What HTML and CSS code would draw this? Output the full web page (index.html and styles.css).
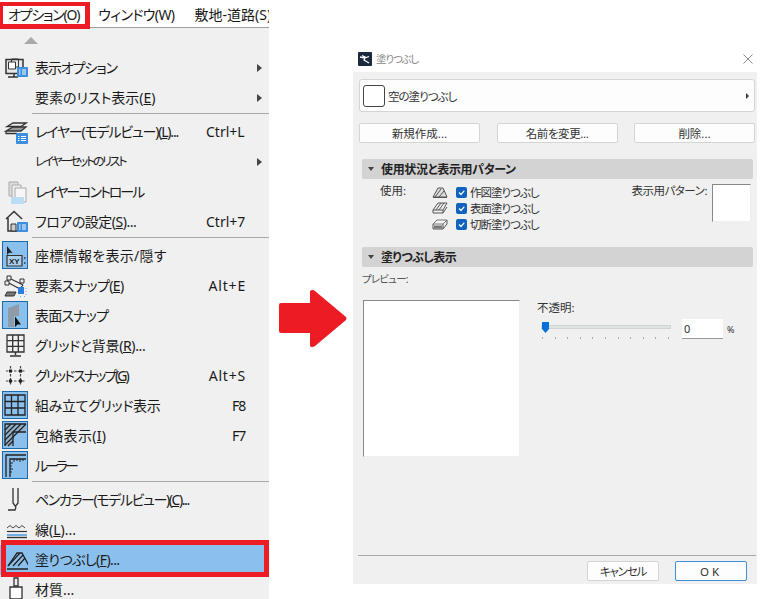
FILE: index.html
```html
<!DOCTYPE html>
<html lang="ja">
<head>
<meta charset="utf-8">
<title>塗りつぶし</title>
<link rel="stylesheet" href="styles.css">
</head>
<body>
<div class="page">
  <nav class="menu">
    <div class="menubar">
      <span class="bar-item bar-item--marked"><span class="sp-f">オプション(O)</span></span>
      <span class="bar-item sp-c">ウィンドウ(W)</span>
      <span class="bar-item">敷地-道路(S)</span>
    </div>
    <div class="scroll-up"><span class="scroll-tri"></span></div>

    <div class="item"><span class="ico"><svg viewBox="0 0 26 28"><path d="M4 6.500h17v14H4z" fill="#e8e8e8" stroke="#333" stroke-width="1.500"/><path d="M6.500 9h7v7h-7z" fill="#fff" stroke="#333"/><path d="M9.500 9V6h7v8h-3" fill="none" stroke="#333"/><path d="M12 21v2.500M6 24h10" stroke="#333" stroke-width="1.500"/><rect x="15" y="14" width="11" height="10" rx="1" fill="#3c8ee0"/><path d="M17 17h1.500M17 19h1.500M17 21h1.500M20 17h4M20 19h4M20 21h4" stroke="#fff"/></svg></span><span class="label sp-e">表示オプション</span><span class="sub"></span></div>
    <div class="item"><span class="ico"></span><span class="label">要素のリスト表示(<u>E</u>)</span><span class="sub"></span></div>
    <div class="sep"></div>
    <div class="item"><span class="ico"><svg viewBox="0 0 26 28"><path d="M5 9.500 11 6h13l-5 3.500z" fill="#eee" stroke="#333" stroke-width="1.300"/><path d="M4 14l7-4h13l-5 4z" fill="#999" stroke="#333" stroke-width="1.300"/><path d="M4 14v2.500h11" fill="none" stroke="#333" stroke-width="1.300"/><rect x="14" y="16" width="12" height="11" rx="1" fill="#3c8ee0"/><path d="M16 19.500h1.500M16 21.500h1.500M16 23.500h1.500M19 19.500h5M19 21.500h5M19 23.500h5" stroke="#fff"/></svg></span><span class="label sp-f">レイヤー(モデルビュー)(<u>L</u>)...</span><span class="key">Ctrl+L</span></div>
    <div class="item item--small"><span class="ico"></span><span class="label sp-i">レイヤーセットのリスト</span><span class="sub"></span></div>
    <div class="item"><span class="ico"><svg viewBox="0 0 26 28"><path d="M7 5h9v14H7z" fill="#ddd" stroke="#aaa"/><path d="M10 8h9v14h-9z" fill="#eee" stroke="#aaa"/><path d="M13 11h11v14H13z" fill="#f6f6f6" stroke="#aaa"/><rect x="9" y="20" width="13" height="7" fill="#bcdcf4"/></svg></span><span class="label sp-h">レイヤーコントロール</span></div>
    <div class="item"><span class="ico"><svg viewBox="0 0 26 28"><path d="M4 12 12 4.500 20 12M6 11v13h10" fill="none" stroke="#333" stroke-width="1.500"/><path d="M9 17h5v7H9z" fill="#ccc" stroke="#333"/><rect x="15" y="15" width="11" height="10" rx="1" fill="#3c8ee0"/><path d="M17 18h1.500M17 20h1.500M17 22h1.500M20 18h4M20 20h4M20 22h4" stroke="#fff"/></svg></span><span class="label sp-c-half">フロアの設定(<u>S</u>)...</span><span class="key">Ctrl+7</span></div>
    <div class="sep"></div>

    <div class="item"><span class="ico ico--on"><svg viewBox="0 0 24 26"><path d="M4 4v9l2.200-2.200 3.300.2z" fill="#222"/><path d="M4 13.500h15V24H4z" fill="#a9cfef" stroke="#333" stroke-width="1.200"/><text x="6" y="22" class="svg-xy">XY</text><path d="M21 16h1.500M21 21h1.500" stroke="#333" stroke-width="1.300"/></svg></span><span class="label sp-a">座標情報を表示/隠す</span></div>
    <div class="item"><span class="ico"><svg viewBox="0 0 26 28"><path d="M7 7 21 14M5 11 18 18M7 7 5 11M21 14 18 18" fill="none" stroke="#333" stroke-width="1.200"/><path d="M5 5h4v4H5zM18 8h4v4h-4zM3 10h4v4H3z" fill="#eee" stroke="#333"/><path d="M5 21h9l-2 4H3z" fill="#777" stroke="#333"/><rect x="16" y="16" width="6" height="7" fill="#2c7de0"/><path d="M24 17v1M24 20v1M24 23v1M18 25.500h1M22 25.500h1" stroke="#6ab0f0"/></svg></span><span class="label sp-c">要素スナップ(<u>E</u>)</span><span class="key key--narrow">Alt+E</span></div>
    <div class="item"><span class="ico ico--on"><svg viewBox="0 0 24 26"><path d="M5 25V6l11-4v12h-5v11z" fill="#8f9ba6"/><path d="M12 14.500v10.500l2.500-2.500 3.500 0z" fill="#111"/></svg></span><span class="label sp-d">表面スナップ</span></div>
    <div class="item"><span class="ico"><svg viewBox="0 0 26 28"><path d="M5 4h17v17H5zM5 9.700h17M5 15.300h17M10.700 4v17M16.300 4v17" fill="none" stroke="#333" stroke-width="1.300"/><path d="M13.500 21v3M8 25h11" stroke="#333" stroke-width="1.500"/></svg></span><span class="label sp-b">グリッドと背景(<u>R</u>)...</span></div>
    <div class="item"><span class="ico"><svg viewBox="0 0 26 28"><path d="M4 10h19M4 20h19M8.500 5v20M18.500 5v20" fill="none" stroke="#444" stroke-width="1.200" stroke-dasharray="2.500 1.500"/><path d="M7 8.500h3v3H7zM17 8.500h3v3h-3zM7 18.500h3v3H7zM17 18.500h3v3h-3z" fill="#222"/></svg></span><span class="label sp-h">グリッドスナップ(<u>G</u>)</span><span class="key key--narrow">Alt+S</span></div>
    <div class="item"><span class="ico ico--on"><svg viewBox="0 0 24 26"><path d="M2 3h20v20H2zM2 9.500h20M2 16h20M8.500 3v20M15 3v20" fill="none" stroke="#222" stroke-width="1.300"/></svg></span><span class="label sp-b">組み立てグリッド表示</span><span class="key key--fn">F8</span></div>
    <div class="item"><span class="ico ico--on"><svg viewBox="0 0 24 26"><path d="M2 2h21v8H10v14H2z" fill="#8fb2cf"/><path d="M2 8 8 2M2 13 13 2M2 18 18 2M2 23 23 2M5 24 10 19" stroke="#222" stroke-width="1.300"/><path d="M2 24V2h21M10 24V10h13" fill="none" stroke="#222" stroke-width="1.300"/></svg></span><span class="label sp-a">包絡表示(<u>I</u>)</span><span class="key key--fn">F7</span></div>
    <div class="item"><span class="ico ico--on"><svg viewBox="0 0 24 26"><path d="M3 25V3h20M7 25V7h16" fill="none" stroke="#222" stroke-width="1.300"/><path d="M11 7v3M14 7v2M17 7v3M20 7v2M7 11h3M7 14h2M7 17h3M7 20h2" stroke="#222"/></svg></span><span class="label sp-j">ルーラー</span></div>
    <div class="sep"></div>

    <div class="item"><span class="ico"><svg viewBox="0 0 26 28"><path d="M11 3v15l2.500 3.500L16 18V3" fill="none" stroke="#333" stroke-width="1.300"/><path d="M6 25h7l1-3" fill="none" stroke="#333" stroke-width="1.300"/></svg></span><span class="label sp-g">ペンカラー(モデルビュー)(<u>C</u>)...</span></div>
    <div class="item"><span class="ico"><svg viewBox="0 0 26 28"><path d="M5 13l3-2.500 3 2.500 3-2.500 3 2.500 3-2.500 3 2.500" fill="none" stroke="#444"/><path d="M5 16.500h20" stroke="#333" stroke-width="1.200"/><path d="M5 20h20" stroke="#3c8ee0" stroke-width="1.400"/><path d="M5 22.500h20" stroke="#333" stroke-width="1.400"/></svg></span><span class="label">線(<u>L</u>)...</span></div>
    <div class="item item--selected"><span class="ico"><svg viewBox="0 0 26 28"><path d="M6 21 15 8h5l7 13" fill="none" stroke="#222" stroke-width="1.300"/><path d="M6 21 18 8M11 21 21 10M16 21 23 13M5 24h21" stroke="#222" stroke-width="1.300"/></svg></span><span class="label sp-c">塗りつぶし(<u>F</u>)...</span></div>
    <div class="item"><span class="ico"><svg viewBox="0 0 26 28"><path d="M12 3h4v8h-4z" fill="none" stroke="#333" stroke-width="1.300"/><path d="M8 12h12v12H8z" fill="#fff" stroke="#333" stroke-width="1.300"/><path d="M9 25v3M12 25v3M15 25v3M18 25v3" stroke="#333"/></svg></span><span class="label">材質...</span></div>
  </nav>

  <svg class="arrow" viewBox="0 0 68 57"><path d="M2 13h29V1.500q0-1.500 2-1.500 2 0 3 1L67 27q1 1.500 0 3L36 56q-1 1-3 1-2 0-2-1.500V43H2q-2 0-2-2V15q0-2 2-2z" fill="#ed1c24"/></svg>

  <section class="dialog">
    <header class="titlebar">
      <span class="title-left"><svg class="app-ico" viewBox="0 0 14 14"><rect width="14" height="14" rx="1" fill="#1c2a3d"/><path d="M2 5l5 1-1 2 5 3M4 3.500l4 2 3-1" fill="none" stroke="#fff" stroke-width="1.300"/></svg><span class="title-text">塗りつぶし</span></span>
      <svg class="close" viewBox="0 0 10 10"><path d="M.5.500l9 9M9.500.500l-9 9" stroke="#8a8a8a" fill="none"/></svg>
    </header>
    <div class="body">
      <div class="picker">
        <span class="swatch"></span>
        <span class="picker-name">空の塗りつぶし</span>
        <span class="picker-arrow"></span>
      </div>
      <div class="btn-row">
        <button class="btn">新規作成...</button>
        <button class="btn btn--tight">名前を変更...</button>
        <button class="btn">削除...</button>
      </div>

      <div class="sect sect--first"><span class="sect-tri"></span>使用状況と表示用パターン</div>
      <div class="usage">
        <span class="usage-label">使用:</span>
        <div class="checks">
          <div class="check"><svg class="mini" viewBox="0 0 16 12"><path d="M1 11 6 2h5l4 9z" fill="#ddd" stroke="#555"/><path d="M3 11 9 3M7 11l5-6M1 11.500h14" stroke="#555"/></svg><span class="box"><svg viewBox="0 0 11 11"><path d="M3 5.500 5 7.500 8.300 3.700" fill="none" stroke="#fff" stroke-width="1.200"/></svg></span><span class="check-text">作図塗りつぶし</span></div>
          <div class="check"><svg class="mini" viewBox="0 0 16 12"><path d="M1 8 6 1h9l-4 7z" fill="#eee" stroke="#555"/><path d="M4 8l5-7M7 8l5-7M1 8v3h10V8M11 11l4-6" fill="none" stroke="#555"/></svg><span class="box"><svg viewBox="0 0 11 11"><path d="M3 5.500 5 7.500 8.300 3.700" fill="none" stroke="#fff" stroke-width="1.200"/></svg></span><span class="check-text">表面塗りつぶし</span></div>
          <div class="check"><svg class="mini" viewBox="0 0 16 12"><path d="M1 6 5 2h10l-4 4z" fill="#f4f4f4" stroke="#777"/><path d="M1 6v5h10V6M11 11l4-5V2" fill="none" stroke="#555"/><path d="M2 7.500h8v3H2z" fill="#777"/></svg><span class="box"><svg viewBox="0 0 11 11"><path d="M3 5.500 5 7.500 8.300 3.700" fill="none" stroke="#fff" stroke-width="1.200"/></svg></span><span class="check-text">切断塗りつぶし</span></div>
        </div>
        <span class="pattern-label">表示用パターン:</span>
        <span class="well well--pattern"></span>
      </div>

      <div class="sect sect--second"><span class="sect-tri"></span>塗りつぶし表示</div>
      <div class="preview-label">プレビュー:</div>
      <div class="preview-row">
        <div class="well well--preview"></div>
        <div class="opacity">
          <div class="opacity-label">不透明:</div>
          <div class="opacity-row">
            <div class="slider">
              <div class="track"></div>
              <svg class="thumb" viewBox="0 0 7 11"><path d="M0 0h7v7L3.500 11 0 7z" fill="#0a6fd6"/></svg>
              <div class="ticks"><i></i><i></i><i></i><i></i><i></i><i></i><i></i><i></i><i></i><i></i><i></i></div>
            </div>
            <span class="num">0</span>
            <span class="pct">%</span>
          </div>
        </div>
      </div>

      <div class="spacer"></div>
      <div class="foot">
        <button class="btn btn--foot btn--cancel">キャンセル</button>
        <button class="btn btn--foot btn--ok">OK</button>
      </div>
    </div>
  </section>
</div>
</body>
</html>
```

FILE: styles.css
```css
*, *::before, *::after { box-sizing: border-box; }
html, body { margin: 0; padding: 0; background: #fff; }
body {
  width: 766px;
  height: 599px;
  overflow: hidden;
  font-family: "Noto Sans", "Noto Sans CJK JP", sans-serif;
  font-feature-settings: "palt";
  color: #1a1a1a;
}
.page { display: flex; align-items: flex-start; height: 599px; overflow: hidden; }

/* letter spacing steps that approximate the narrow kana of the original UI font */
.sp-a { letter-spacing: .3px; }
.sp-b { letter-spacing: -.35px; }
.sp-c-half { letter-spacing: -.5px; }
.sp-c { letter-spacing: -.6px; }
.sp-d { letter-spacing: -.8px; }
.sp-e { letter-spacing: -1.1px; }
.sp-f { letter-spacing: -1.2px; }
.sp-g { letter-spacing: -1.4px; }
.sp-h { letter-spacing: -2px; }
.sp-i { letter-spacing: -2.3px; }
.sp-j { letter-spacing: -3px; }

/* left menu */
.menu { width: 269px; height: 599px; flex: none; background: #f0f0f0; overflow: hidden; position: relative; }
.menubar {
  display: flex; height: 28px; background: #fff; border-bottom: 1px solid #a0a0a0;
  font-size: 14px; line-height: 26px; white-space: nowrap;
  align-items: flex-start; position: relative; z-index: 1;
}
.bar-item { flex: none; padding: 2px 0 0; margin-right: 20px; }
.bar-item:first-child { margin-left: 8px; margin-right: 19px; }
.bar-item--marked { position: relative; height: 27px; }
.bar-item--marked::after {
  content: ""; position: absolute; left: -8px; right: -11px; top: 2px; height: 27px;
  border: solid #ed1c24; border-width: 4px 5px 5px 3px;
}
.scroll-up { height: 25px; padding: 9px 0 0 24px; }
.scroll-tri {
  display: block; width: 0; height: 0;
  border-left: 7px solid transparent; border-right: 7px solid transparent; border-bottom: 7px solid #aaa;
}
.item { display: flex; align-items: center; height: 30px; font-size: 14px; position: relative; white-space: nowrap; }
.item--small .label { font-size: 12px; }
.ico { width: 26px; height: 28px; margin: 0 7px 0 2px; flex: none; align-self: flex-start; display: block; }
.ico svg { display: block; width: 100%; height: 100%; }
.ico--on { background: #8cc0ec; border: 1px solid #1f69a8; }
.label { flex: 1; padding-bottom: 2px; }
.key { width: 40px; margin-right: 23px; padding-bottom: 2px; color: #1a1a1a; }
.key--narrow { text-align: right; letter-spacing: .8px; }
.key--fn { padding-left: 26px; letter-spacing: -1px; }
.sub {
  width: 0; height: 0; margin-right: 7px;
  border-top: 4px solid transparent; border-bottom: 4px solid transparent; border-left: 5px solid #444;
}
.sep { height: 1px; margin: 0 0 3px 32px; background: #a8a8a8; }
.item--selected { background: #8cc0ec; }
.item--selected::after {
  content: ""; position: absolute; left: 1px; right: 0; top: -5px; bottom: -2px;
  border: 5px solid #ed1c24;
}

/* arrow */
.arrow { width: 68px; height: 57px; flex: none; margin: 290px 0 0 10px; }

/* dialog */
.dialog { width: 404px; height: 539px; margin: 45px 0 0 6px; flex: none; display: flex; flex-direction: column; font-size: 11.5px; color: #333; }
.titlebar { height: 27px; flex: none; background: #fff; display: flex; align-items: center; justify-content: space-between; padding: 0 4px 0 5px; color: #888; }
.title-left { display: flex; align-items: center; gap: 4px; }
.title-text { font-size: 10.5px; letter-spacing: -1.2px; }
.app-ico { width: 14px; height: 14px; }
.close { width: 10px; height: 10px; }
.body { flex: 1; background: #f0f0f0; padding: 7px 2px 0 6px; display: flex; flex-direction: column; min-height: 0; }
.picker { height: 33px; background: #fdfdfd; border: 1px solid #d4d4d4; border-radius: 3px; display: flex; align-items: center; padding: 0 5px 0 3px; flex: none; }
.swatch { width: 22px; height: 22px; border: 1px solid #444; border-radius: 3px; background: #fff; margin-right: 3px; }
.picker-name { flex: 1; letter-spacing: -1px; }
.picker-arrow { border-top: 3px solid transparent; border-bottom: 3px solid transparent; border-left: 3px solid #333; }
.btn-row { display: flex; justify-content: space-between; margin-top: 11px; flex: none; }
.btn {
  font: inherit; font-size: 11.5px; color: #333; height: 20px; width: 121px; padding: 0; background: #fdfdfd;
  border: 1px solid #d4d4d4; border-radius: 2px; line-height: 17px;
}
.btn--tight { letter-spacing: -.4px; }
.sect {
  height: 20px; margin: 0 2px 0 3px; background: #d3d3d3; border-radius: 2px; display: flex; align-items: center;
  padding-left: 6px; font-weight: 700; font-size: 12px; color: #222; flex: none;
}
.sect--first { margin-top: 16px; letter-spacing: -.35px; }
.sect--second { margin-top: 20px; letter-spacing: -.6px; }
.sect-tri { width: 0; height: 0; margin-right: 7px; border-left: 3.5px solid transparent; border-right: 3.5px solid transparent; border-top: 4px solid #444; }
.usage { display: flex; align-items: flex-start; padding: 5px 4px 0 21px; height: 48px; flex: none; }
.usage-label { width: 52px; line-height: 14px; }
.checks { flex: 1; display: flex; flex-direction: column; }
.check { display: flex; align-items: center; height: 16px; }
.check-text { letter-spacing: -1px; }
.mini { width: 16px; height: 12px; margin-right: 8px; flex: none; }
.box { width: 11px; height: 11px; background: #0f62bd; border-radius: 2px; margin-right: 3px; flex: none; }
.box svg { display: block; width: 100%; height: 100%; }
.pattern-label { line-height: 14px; margin-right: 5px; letter-spacing: -.5px; }
.well { display: block; background: #fff; border: 1px solid #eee; border-top-color: #888; border-left-color: #888; flex: none; }
.well--pattern { width: 39px; height: 38px; }
.preview-label { margin: 5px 0 0 3px; line-height: 14px; color: #555; font-size: 10.5px; letter-spacing: -.8px; flex: none; }
.preview-row { display: flex; margin: 14px 0 0 4px; flex: none; }
.well--preview { width: 157px; height: 157px; }
.opacity { margin-left: 17px; }
.opacity-label { line-height: 14px; margin-top: 1px; }
.opacity-row { display: flex; align-items: flex-start; margin-top: 4px; }
.slider { width: 130px; margin: 0 11px 0 4px; position: relative; padding-top: 6px; }
.track { height: 4px; background: #dfe3e3; border: 1px solid #d0d4d4; }
.thumb { position: absolute; left: 1px; top: 3px; width: 7px; height: 11px; }
.ticks { display: flex; justify-content: space-between; margin: 8px 2px 0 1px; }
.ticks i { display: block; width: 1px; height: 2px; background: #aaa; }
.num { width: 41px; height: 20px; background: #fff; border-bottom: 1px solid #999; padding-left: 2px; line-height: 19px; font-size: 11px; }
.pct { margin-left: 4px; font-size: 9px; line-height: 22px; }
.spacer { flex: 1; }
.foot { border-top: 1px solid #a8a8a8; margin: 0 -1px; height: 29px; padding: 5px 9px 0 0; display: flex; justify-content: flex-end; gap: 16px; flex: none; }
.btn--foot { width: 72px; height: 20px; }
.btn--cancel { letter-spacing: -1.2px; }
.btn--ok { border-color: #3d8fd8; letter-spacing: 3px; }
.svg-xy { font-family: "Liberation Sans", sans-serif; font-size: 8px; font-weight: 700; fill: #222; }
```
